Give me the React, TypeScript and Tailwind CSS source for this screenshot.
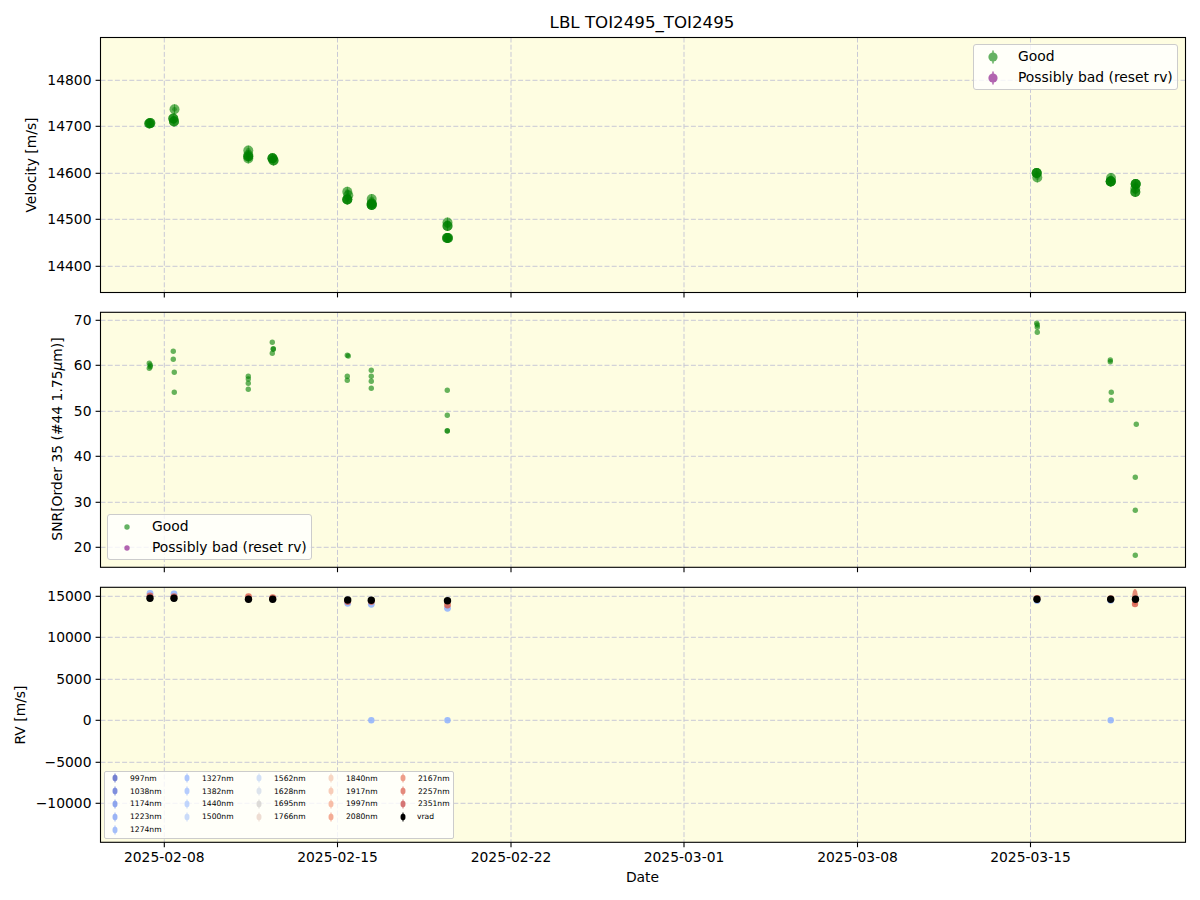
const XTICKS = [164.3, 337.5, 511, 684, 857.5, 1030.5]
const X_LABELS = ["2025-02-08", "2025-02-15", "2025-02-22", "2025-03-01", "2025-03-08", "2025-03-15"]
const LEFT = 100.5
const RIGHT = 1185.5

type Tick = { y: number; label: string }

const VELOCITY_TICKS: Tick[] = [
  { y: 80.3, label: "14800" },
  { y: 126.3, label: "14700" },
  { y: 173.3, label: "14600" },
  { y: 219.3, label: "14500" },
  { y: 266.3, label: "14400" },
]
const SNR_TICKS: Tick[] = [
  { y: 320.3, label: "70" },
  { y: 365.3, label: "60" },
  { y: 411.3, label: "50" },
  { y: 456.3, label: "40" },
  { y: 502.3, label: "30" },
  { y: 547.3, label: "20" },
]
const RV_TICKS: Tick[] = [
  { y: 596.3, label: "15000" },
  { y: 637.3, label: "10000" },
  { y: 679.3, label: "5000" },
  { y: 720.3, label: "0" },
  { y: 762.3, label: "−5000" },
  { y: 803.3, label: "−10000" },
]

// x, y, how many exposures are stacked on that spot
const VELOCITY_POINTS: [number, number, number][] = [
  [149.3, 123.5, 2],
  [150.3, 123.1, 2],
  [174.5, 109.3, 1],
  [173.3, 118.5, 2],
  [174, 121.5, 2],
  [248.3, 150.5, 1],
  [248.3, 155, 1],
  [248.3, 156.5, 2],
  [248.3, 158.5, 1],
  [272.5, 158.3, 3],
  [273.5, 160.5, 2],
  [347.3, 191.7, 1],
  [348.3, 195.3, 1],
  [347.3, 199.5, 3],
  [371.7, 199, 1],
  [371.7, 203.5, 2],
  [371.7, 205, 3],
  [447.5, 222.5, 1],
  [447.5, 226, 2],
  [447, 238, 2],
  [448, 238, 2],
  [1036.7, 173, 3],
  [1037.3, 177.5, 1],
  [1111, 178, 1],
  [1110.7, 181.5, 4],
  [1135.7, 184, 3],
  [1135.3, 188.5, 1],
  [1135.3, 192, 2],
]

const SNR_POINTS: [number, number][] = [
  [149.3, 363.3], [149.3, 368.3], [150.3, 365], [150.3, 366.7],
  [173.3, 351.3], [173.3, 359.3], [174.3, 372.3], [174.3, 392.3],
  [248.3, 376.3], [248.3, 379], [248.3, 383.3], [248.3, 389.3],
  [272.3, 342.3], [273.3, 348.7], [273.3, 349.3], [272.3, 353.3],
  [347.3, 355.3], [348.3, 356], [347.3, 376.3], [347.3, 380.3],
  [371.3, 370.3], [371.3, 376.3], [371.3, 381.3], [371.3, 388.3],
  [447.3, 390.3], [447.3, 415.3], [447.3, 430.7], [447.3, 431],
  [1036.7, 323.3], [1037.3, 325], [1037.3, 327.3], [1037.3, 332.3],
  [1110.3, 360], [1110.3, 361.7], [1111.3, 392.3], [1111.3, 400.3],
  [1136.3, 424.3], [1135.3, 477.3], [1135.3, 510.3], [1135.3, 555.3],
]

// black vrad point with the spread of the coloured orders behind it
const RV_CLUSTERS: { x: number; y: number; blue?: number; red?: number }[] = [
  { x: 150, y: 598.3, blue: 593.3, red: 596 },
  { x: 174, y: 598.3, blue: 594, red: 596.7 },
  { x: 248.5, y: 599.3, red: 596.7 },
  { x: 272.7, y: 599.3, red: 597.7 },
  { x: 347.7, y: 600, blue: 603.3, red: 601.5 },
  { x: 371.3, y: 600.3, blue: 604.3, red: 601.5 },
  { x: 447.5, y: 600.7, blue: 608.3, red: 605 },
  { x: 1037, y: 599.3, blue: 600.5, red: 598.5 },
  { x: 1110.7, y: 599.3, blue: 600.3, red: 598.7 },
]

const ORDER_COLUMNS: { label: string; color: string }[][] = [
  [
    { label: "997nm", color: "#3b4cc0" },
    { label: "1038nm", color: "#4961d2" },
    { label: "1174nm", color: "#5f7fe8" },
    { label: "1223nm", color: "#7295f4" },
    { label: "1274nm", color: "#7ea3fa" },
  ],
  [
    { label: "1327nm", color: "#8db0fe" },
    { label: "1382nm", color: "#96b7ff" },
    { label: "1440nm", color: "#a6c4fe" },
    { label: "1500nm", color: "#b5cdfa" },
  ],
  [
    { label: "1562nm", color: "#c0d4f5" },
    { label: "1628nm", color: "#d0d9e8" },
    { label: "1695nm", color: "#cfcdcb" },
    { label: "1766nm", color: "#e8cfc4" },
  ],
  [
    { label: "1840nm", color: "#f4c5ad" },
    { label: "1917nm", color: "#f6b99e" },
    { label: "1997nm", color: "#f6a385" },
    { label: "2080nm", color: "#f08a6c" },
  ],
  [
    { label: "2167nm", color: "#e8765c" },
    { label: "2257nm", color: "#d95847" },
    { label: "2351nm", color: "#c43c3c" },
    { label: "vrad", color: "#000000" },
  ],
]

function Axes({ top, bottom, ticks, showDates }: { top: number; bottom: number; ticks: Tick[]; showDates?: boolean }) {
  return (
    <>
      <rect x={LEFT} y={top} width={RIGHT - LEFT} height={bottom - top} fill="#fefde1" />
      {XTICKS.map((x) => (
        <line key={x} x1={x} x2={x} y1={top} y2={bottom} stroke="#c9c9d6" strokeWidth="1" strokeDasharray="5 2.2" />
      ))}
      {ticks.map((t) => (
        <line key={t.y} x1={LEFT} x2={RIGHT} y1={t.y} y2={t.y} stroke="#c9c9d6" strokeWidth="1" strokeDasharray="5 2.2" />
      ))}
      {ticks.map((t) => (
        <g key={t.label}>
          <line x1={LEFT - 4.9} x2={LEFT} y1={t.y} y2={t.y} stroke="#000" strokeWidth="1.1" />
          <text x={LEFT - 9} y={t.y + 5} textAnchor="end" fontSize="13.89" fill="#000">{t.label}</text>
        </g>
      ))}
      {XTICKS.map((x, i) => (
        <g key={x}>
          <line x1={x} x2={x} y1={bottom} y2={bottom + 4.9} stroke="#000" strokeWidth="1.1" />
          {showDates && <text x={x} y={bottom + 20} textAnchor="middle" fontSize="13.89" fill="#000">{X_LABELS[i]}</text>}
        </g>
      ))}
    </>
  )
}

function Frame({ top, bottom }: { top: number; bottom: number }) {
  return <rect x={LEFT} y={top} width={RIGHT - LEFT} height={bottom - top} fill="none" stroke="#000" strokeWidth="1.1" />
}

function YLabel({ x, y, children }: { x: number; y: number; children: React.ReactNode }) {
  return (
    <text x={x} y={y} transform={`rotate(-90 ${x} ${y})`} textAnchor="middle" fontSize="13.89" fill="#000">
      {children}
    </text>
  )
}

function ErrorbarMarker({ color }: { color: string }) {
  return (
    <svg width="28" height="16" viewBox="0 0 28 16" className="opacity-60">
      <line x1="14" x2="14" y1="1.5" y2="14.5" stroke={color} strokeWidth="1.5" />
      <circle cx="14" cy="8" r="4.6" fill={color} />
    </svg>
  )
}

function DotMarker({ color }: { color: string }) {
  return (
    <svg width="28" height="16" viewBox="0 0 28 16" className="opacity-60">
      <circle cx="14" cy="8" r="2.7" fill={color} />
    </svg>
  )
}

function Legend({ className, dots }: { className: string; dots?: boolean }) {
  const Marker = dots ? DotMarker : ErrorbarMarker
  return (
    <div className={`absolute flex h-[46px] w-[205px] flex-col justify-center rounded-[3px] border border-[#cccccc] bg-white/80 pl-[5px] ${className}`}>
      {[
        { label: "Good", color: "#008000" },
        { label: "Possibly bad (reset rv)", color: "#800080" },
      ].map((row) => (
        <div key={row.label} className="flex h-[21px] items-center">
          <Marker color={row.color} />
          <span className="ml-[11px] whitespace-nowrap text-[13.89px] leading-none text-black">{row.label}</span>
        </div>
      ))}
    </div>
  )
}

function OrdersLegend() {
  return (
    <div className="absolute left-[104px] top-[194px] flex h-[68px] w-[350px] rounded-[2px] border border-[#cccccc] bg-white/80 pl-[3px]">
      {ORDER_COLUMNS.map((col) => (
        <div key={col[0].label} className="flex w-[72px] shrink-0 flex-col">
          {col.map((o) => (
            <div key={o.label} className="flex h-[12.9px] items-center">
              <svg width="14" height="10" viewBox="0 0 14 10" className={o.label === "vrad" ? "" : "opacity-70"}>
                <line x1="7" x2="7" y1="0.5" y2="9.5" stroke={o.color} strokeWidth="1" />
                <ellipse cx="7" cy="5" rx="2.5" ry="3.2" fill={o.color} />
              </svg>
              <span className={`whitespace-nowrap text-[7.6px] leading-none text-black ${o.label === "vrad" ? "ml-[7px]" : "ml-[8px]"}`}>
                {o.label}
              </span>
            </div>
          ))}
        </div>
      ))}
    </div>
  )
}

function VelocityPanel() {
  return (
    <div className="relative h-[270px] w-[1200px]">
      <svg width="1200" height="270" viewBox="0 32 1200 270" className="block">
        <Axes top={37.5} bottom={292.5} ticks={VELOCITY_TICKS} />
        <YLabel x={36} y={165}>Velocity [m/s]</YLabel>
        {VELOCITY_POINTS.map(([x, y, n], i) => (
          <g key={i} fill="#008000" stroke="#008000">
            <line x1={x} x2={x} y1={y - 5} y2={y + 5} strokeWidth="1" strokeOpacity="0.5" />
            {Array.from({ length: n }).map((_, k) => (
              <circle key={k} cx={x} cy={y} r="5" stroke="none" fillOpacity="0.6" />
            ))}
            <circle cx={x} cy={y} r="2.4" stroke="none" fillOpacity="0.5" />
          </g>
        ))}
        <Frame top={37.5} bottom={292.5} />
      </svg>
      <Legend className="right-[22px] top-[12px]" />
    </div>
  )
}

function SnrPanel() {
  return (
    <div className="relative h-[275px] w-[1200px]">
      <svg width="1200" height="275" viewBox="0 302 1200 275" className="block">
        <Axes top={312.3} bottom={567.3} ticks={SNR_TICKS} />
        <YLabel x={61.5} y={439}>
          SNR[Order 35 (#44 1.75<tspan fontStyle="italic">μ</tspan>m)]
        </YLabel>
        {SNR_POINTS.map(([x, y], i) => (
          <circle key={i} cx={x} cy={y} r="2.7" fill="#008000" fillOpacity="0.6" />
        ))}
        <Frame top={312.3} bottom={567.3} />
      </svg>
      <Legend className="left-[107px] top-[212px]" dots />
    </div>
  )
}

function RvPanel() {
  return (
    <div className="relative h-[289px] w-[1200px]">
      <svg width="1200" height="289" viewBox="0 577 1200 289" className="block">
        <Axes top={587.3} bottom={842.3} ticks={RV_TICKS} showDates />
        <YLabel x={24.5} y={715}>RV [m/s]</YLabel>
        {[371.3, 447.5, 1110.7].map((x) => (
          <circle key={x} cx={x} cy={720.3} r="3.2" fill="#8db0fe" fillOpacity="0.85" />
        ))}
        {RV_CLUSTERS.map((c) => (
          <g key={c.x}>
            {c.blue && <circle cx={c.x} cy={c.blue} r="3.4" fill="#8db0fe" fillOpacity="0.85" />}
            {c.red && <circle cx={c.x} cy={c.red} r="3.4" fill="#d95847" fillOpacity="0.8" />}
          </g>
        ))}
        <ellipse cx={1135} cy={597} rx="2.8" ry="8" fill="#d95847" fillOpacity="0.7" />
        <circle cx={1135} cy={604} r="3.2" fill="#d95847" fillOpacity="0.8" />
        {[...RV_CLUSTERS, { x: 1135.5, y: 599.3 }].map((c) => (
          <circle key={c.x} cx={c.x} cy={c.y} r="3.7" fill="#000" />
        ))}
        <Frame top={587.3} bottom={842.3} />
      </svg>
      <OrdersLegend />
    </div>
  )
}

export default function App() {
  return (
    <div className="h-[900px] w-[1200px] overflow-hidden bg-white font-['DejaVu_Sans',sans-serif] text-black">
      <div className="flex h-[32px] items-end justify-center pl-[84px] text-[16.67px] leading-[18px]">
        LBL TOI2495_TOI2495
      </div>
      <VelocityPanel />
      <SnrPanel />
      <RvPanel />
      <div className="flex h-[22px] items-center justify-center pl-[85px] text-[13.89px]">Date</div>
    </div>
  )
}
